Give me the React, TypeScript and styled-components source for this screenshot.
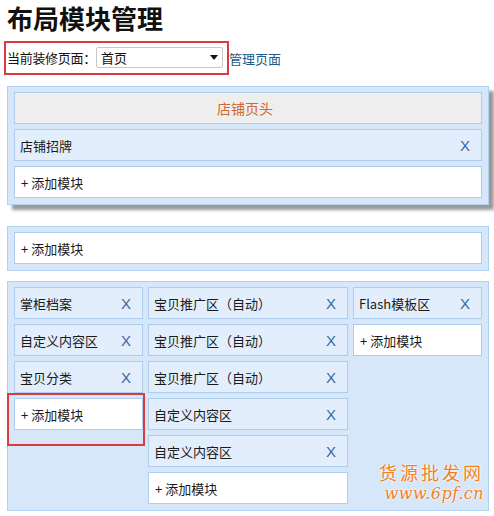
import { FC } from 'react';
import styled, { createGlobalStyle } from 'styled-components';

const GlobalStyle = createGlobalStyle`
  html, body {
    margin: 0;
    padding: 0;
    background: #fff;
  }
  body {
    font-family: "Noto Sans CJK SC", "Noto Sans", sans-serif;
    font-size: 13px;
    color: #222;
  }
`;

const Page = styled.div`
  position: relative;
  width: 494px;
  height: 516px;
  padding: 0 5px 0 7px;
  box-sizing: border-box;
  overflow: hidden;
`;

const Title = styled.h1`
  margin: 0;
  padding-top: 1px;
  font-size: 26px;
  font-weight: 700;
  line-height: 34px;
  color: #111;
`;

const Toolbar = styled.div`
  display: flex;
  align-items: center;
  margin: 6px 0 0 -3px;
`;

const Highlight = styled.div`
  display: inline-flex;
  align-items: center;
  border: 2px solid #db3a40;
  padding: 4px 4px 5px 1px;
`;

const Label = styled.span`
  font-size: 13px;
  letter-spacing: -0.3px;
  color: #111;
`;

const SelectWrap = styled.div`
  position: relative;
  width: 127px;
  height: 21px;
`;

const Select = styled.select`
  appearance: none;
  width: 100%;
  height: 100%;
  border: 1px solid #c8c8c8;
  border-radius: 2px;
  background: #fff;
  padding: 0 0 0 4px;
  font-family: inherit;
  font-size: 13px;
  color: #111;
  outline: none;
`;

const Caret = styled.span`
  position: absolute;
  right: 5px;
  top: 8px;
  width: 0;
  height: 0;
  border-left: 4px solid transparent;
  border-right: 4px solid transparent;
  border-top: 5px solid #111;
  pointer-events: none;
`;

const ManageLink = styled.a`
  margin-left: 0;
  color: #21598a;
  text-decoration: none;
  font-size: 13px;
`;

const Panel = styled.div<{ shadow?: boolean; gapTop: number }>`
  margin-top: ${({ gapTop }) => gapTop}px;
  width: 482px;
  box-sizing: border-box;
  background: #d6e7fa;
  border: 1px solid #b2d0f0;
  padding: 5px 6px 6px;
  display: flex;
  flex-direction: column;
  gap: 5px;
  ${({ shadow }) => shadow && 'box-shadow: 5px 5px 3px #9a9a9a;'}
`;

const Columns = styled.div`
  display: grid;
  grid-template-columns: 129px 200px 1fr;
  gap: 5px;
  align-items: start;
`;

const Column = styled.div`
  display: flex;
  flex-direction: column;
  gap: 5px;
`;

const Row = styled.div<{ variant?: 'head' | 'module' | 'add' }>`
  display: flex;
  align-items: center;
  height: 32px;
  box-sizing: border-box;
  padding: 0 11px 0 5px;
  border: 1px solid #aecdee;
  background: ${({ variant }) => (variant === 'head' ? '#eeeeee' : variant === 'add' ? '#ffffff' : '#e3eefc')};
  color: ${({ variant }) => (variant === 'head' ? '#d0692a' : '#1a1a1a')};
  justify-content: ${({ variant }) => (variant === 'head' ? 'center' : 'flex-start')};
  font-size: ${({ variant }) => (variant === 'head' ? '14px' : '13px')};
  ${({ variant }) => variant === 'add' && 'padding-left: 6px;'}
`;

const RowLabel = styled.span`
  flex: 1;
  white-space: nowrap;
`;

const Close = styled.span`
  color: #3b67a6;
  font-family: "Liberation Sans", sans-serif;
  font-size: 15px;
  line-height: 1;
`;

const AddMark = styled.span`
  border: 2px solid #db3a40;
  position: absolute;
  left: 7px;
  top: 393px;
  width: 138px;
  height: 53px;
  box-sizing: border-box;
  pointer-events: none;
`;

const Watermark = styled.div`
  position: absolute;
  right: 10px;
  bottom: 12px;
  color: #f0811e;
  text-align: right;
  text-shadow: 0 0 2px #fff, 0 0 2px #fff;
`;

const WmTitle = styled.div`
  font-family: "Noto Sans CJK SC", sans-serif;
  font-size: 18px;
  line-height: 24px;
  letter-spacing: 3px;
`;

const WmUrl = styled.div`
  font-family: "DejaVu Serif", serif;
  font-style: italic;
  font-size: 16px;
  line-height: 20px;
  letter-spacing: 0.5px;
`;

type Item = { label: string; removable?: boolean };

const Module: FC<Item> = ({ label, removable = true }) => (
  <Row variant="module">
    <RowLabel>{label}</RowLabel>
    {removable && <Close>X</Close>}
  </Row>
);

const AddRow: FC = () => (
  <Row variant="add">
    <RowLabel>+ 添加模块</RowLabel>
  </Row>
);

const columns: Item[][] = [
  [{ label: '掌柜档案' }, { label: '自定义内容区' }, { label: '宝贝分类' }],
  [
    { label: '宝贝推广区（自动）' },
    { label: '宝贝推广区（自动）' },
    { label: '宝贝推广区（自动）' },
    { label: '自定义内容区' },
    { label: '自定义内容区' },
  ],
  [{ label: 'Flash模板区' }],
];

export default function App() {
  return (
    <Page>
      <GlobalStyle />
      <Title>布局模块管理</Title>
      <Toolbar>
        <Highlight>
          <Label>当前装修页面：</Label>
          <SelectWrap>
            <Select defaultValue="home">
              <option value="home">首页</option>
            </Select>
            <Caret />
          </SelectWrap>
        </Highlight>
        <ManageLink href="#">管理页面</ManageLink>
      </Toolbar>

      <Panel shadow gapTop={11}>
        <Row variant="head">店铺页头</Row>
        <Module label="店铺招牌" />
        <AddRow />
      </Panel>

      <Panel gapTop={21}>
        <AddRow />
      </Panel>

      <Panel gapTop={10}>
        <Columns>
          {columns.map((col, i) => (
            <Column key={i}>
              {col.map((item, j) => (
                <Module key={j} label={item.label} removable={item.removable} />
              ))}
              <AddRow />
            </Column>
          ))}
        </Columns>
      </Panel>

      <AddMark />

      <Watermark>
        <WmTitle>货源批发网</WmTitle>
        <WmUrl>www.6pf.cn</WmUrl>
      </Watermark>
    </Page>
  );
}
